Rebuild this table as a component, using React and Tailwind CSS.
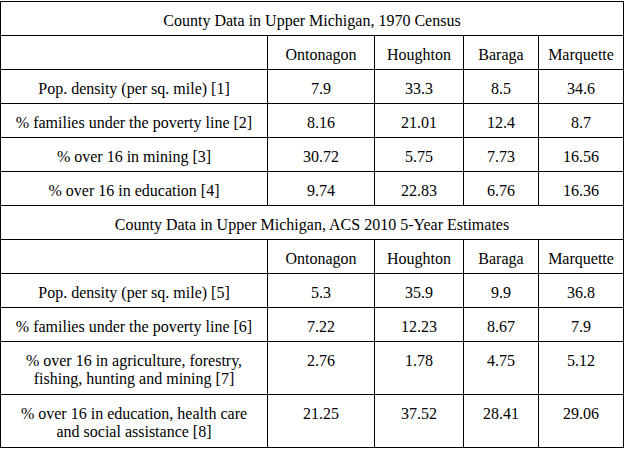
const COUNTIES = ["Ontonagon", "Houghton", "Baraga", "Marquette"];

const SECTIONS = [
  {
    title: "County Data in Upper Michigan, 1970 Census",
    rows: [
      { label: ["Pop. density (per sq. mile) [1]"], values: ["7.9", "33.3", "8.5", "34.6"] },
      { label: ["% families under the poverty line [2]"], values: ["8.16", "21.01", "12.4", "8.7"] },
      { label: ["% over 16 in mining [3]"], values: ["30.72", "5.75", "7.73", "16.56"] },
      { label: ["% over 16 in education [4]"], values: ["9.74", "22.83", "6.76", "16.36"] },
    ],
  },
  {
    title: "County Data in Upper Michigan, ACS 2010 5-Year Estimates",
    rows: [
      { label: ["Pop. density (per sq. mile) [5]"], values: ["5.3", "35.9", "9.9", "36.8"] },
      { label: ["% families under the poverty line [6]"], values: ["7.22", "12.23", "8.67", "7.9"] },
      {
        label: ["% over 16 in agriculture, forestry,", "fishing, hunting and mining [7]"],
        values: ["2.76", "1.78", "4.75", "5.12"],
      },
      {
        label: ["% over 16 in education, health care", "and social assistance [8]"],
        values: ["21.25", "37.52", "28.41", "29.06"],
      },
    ],
  },
];

function Cell({ children, tall }) {
  return (
    <div
      className={`border-l border-t border-black pt-[10px] text-center leading-[18px] ${
        tall ? "h-[53px]" : "h-[34px]"
      }`}
    >
      {children}
    </div>
  );
}

export default function App() {
  return (
    <div className="h-[450px] w-[625px] bg-white pt-px font-[family-name:'Liberation_Serif','Times_New_Roman',serif] text-[16px] text-black">
      <div className="grid w-[624px] grid-cols-[267px_107px_89px_75px_85px] border-b border-r border-black">
        {SECTIONS.map((section) => (
          <div key={section.title} className="contents">
            <div className="col-span-5">
              <Cell>{section.title}</Cell>
            </div>
            <Cell />
            {COUNTIES.map((c) => (
              <Cell key={c}>{c}</Cell>
            ))}
            {section.rows.map((row) => {
              const tall = row.label.length > 1;
              return (
                <div key={row.label[0]} className="contents">
                  <Cell tall={tall}>
                    {row.label.map((line, i) => (
                      <div key={i}>{line}</div>
                    ))}
                  </Cell>
                  {row.values.map((v, i) => (
                    <Cell key={i} tall={tall}>
                      {v}
                    </Cell>
                  ))}
                </div>
              );
            })}
          </div>
        ))}
      </div>
    </div>
  );
}
